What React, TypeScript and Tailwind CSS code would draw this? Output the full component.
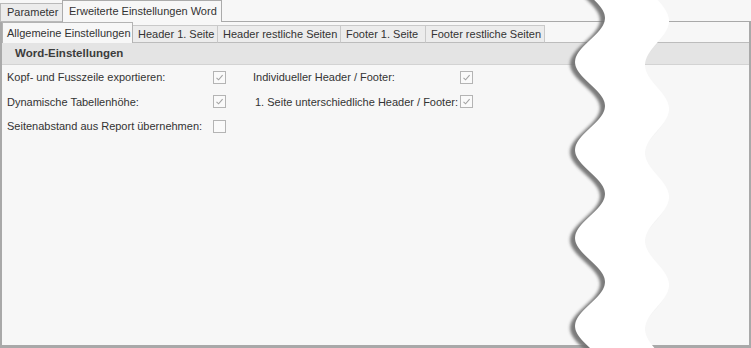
import React from "react";

/**
 * Word-Export: Erweiterte Einstellungen (Screenshot mit Riss-Kante)
 */

const font = { fontFamily: '"Liberation Sans", Arial, sans-serif' };

function Check({ checked }: { checked?: boolean }) {
  return (
    <span className="flex h-[13px] w-[13px] items-center justify-center border border-[#b4b4b4] bg-[#fafafa]">
      {checked && (
        <svg width="11" height="11" viewBox="0 0 11 11">
          <path d="M2.5 5.8 L4.6 7.8 L8.6 3.2" fill="none" stroke="#a3a3a3" strokeWidth="1.1" />
        </svg>
      )}
    </span>
  );
}

// Wellenband (abgerissene Kante), Punkte werden beim Rendern berechnet
function TornEdge() {
  const period = 88;
  const left: string[] = [];
  const right: string[] = [];
  for (let y = -10; y <= 360; y += 2) {
    const xl = 590 - 15 * Math.cos((2 * Math.PI * (y - 62)) / period);
    const xr = 657 - 12 * Math.cos((2 * Math.PI * (y - 65)) / period);
    left.push(`${xl.toFixed(1)},${y}`);
    right.unshift(`${xr.toFixed(1)},${y}`);
  }
  const band = `M${left.join(" L")} L${right.join(" L")} Z`;

  return (
    <svg className="pointer-events-none absolute left-0 top-0" width="751" height="348" viewBox="0 0 751 348">
      <defs>
        <filter id="tornShadow" x="-10%" y="-10%" width="120%" height="120%">
          <feGaussianBlur stdDeviation="1.6" />
        </filter>
      </defs>
      <path d={band} fill="#6e6e6e" opacity="0.9" transform="translate(-5 2)" filter="url(#tornShadow)" />
      <path d={band} fill="#ffffff" />
    </svg>
  );
}

const innerTabs = [
  { label: "Header 1. Seite", w: "w-[85px]" },
  { label: "Header restliche Seiten", w: "w-[123px]" },
  { label: "Footer 1. Seite", w: "w-[85px]" },
  { label: "Footer restliche Seiten", w: "w-[119px]" },
];

export default function App() {
  return (
    <div className="relative h-[348px] w-[751px] overflow-hidden bg-[#f7f7f7] text-[11px] text-[#333333]" style={font}>
      {/* obere Tabs */}
      <div className="flex h-[22px]">
        <div className="mt-[3px] flex h-[19px] w-[62px] items-center border-b border-l border-t border-[#b9b9b9] bg-[#ececec] pl-[6px]">
          Parameter
        </div>
        <div className="flex h-[22px] w-[160px] items-center border-l border-r border-t border-[#ababab] bg-[#f7f7f7] pl-[6px]">
          Erweiterte Einstellungen Word
        </div>
        <div className="flex-1 border-b border-[#a9a9a9]" />
      </div>

      {/* Inhalt */}
      <div className="flex h-[326px] flex-col border-b-[3px] border-l-2 border-r-2 border-[#a9a9a9]">
        {/* innere Tabs */}
        <div className="flex h-[21px]">
          <div className="flex h-[21px] w-[131px] items-center border-l border-r border-t border-[#b3b3b3] bg-[#f7f7f7] pl-[4px]">
            Allgemeine Einstellungen
          </div>
          {innerTabs.map((t) => (
            <div
              key={t.label}
              className={`${t.w} mt-[3px] flex h-[18px] items-center border-b border-r border-t border-[#c9c9c9] border-b-[#bcbcbc] bg-[#ececec] pl-[5px]`}
            >
              {t.label}
            </div>
          ))}
          <div className="flex-1 border-b border-[#bcbcbc]" />
        </div>

        {/* Gruppe */}
        <div className="flex h-[22px] items-center border-b border-[#d3d3d3] bg-[#e4e4e4] pl-[13px] text-[11.5px] font-bold text-[#3c3c3c]">
          Word-Einstellungen
        </div>

        <div className="grid auto-rows-[24.5px] grid-cols-[206px_13px_27px_207px_13px] items-center pl-[5px]">
          <span>Kopf- und Fusszeile exportieren:</span>
          <Check checked />
          <span />
          <span>Individueller Header / Footer:</span>
          <Check checked />

          <span>Dynamische Tabellenhöhe:</span>
          <Check checked />
          <span />
          <span className="pl-[2px]">1. Seite unterschiedliche Header / Footer:</span>
          <Check checked />

          <span>Seitenabstand aus Report übernehmen:</span>
          <Check />
        </div>
      </div>

      <TornEdge />
    </div>
  );
}
